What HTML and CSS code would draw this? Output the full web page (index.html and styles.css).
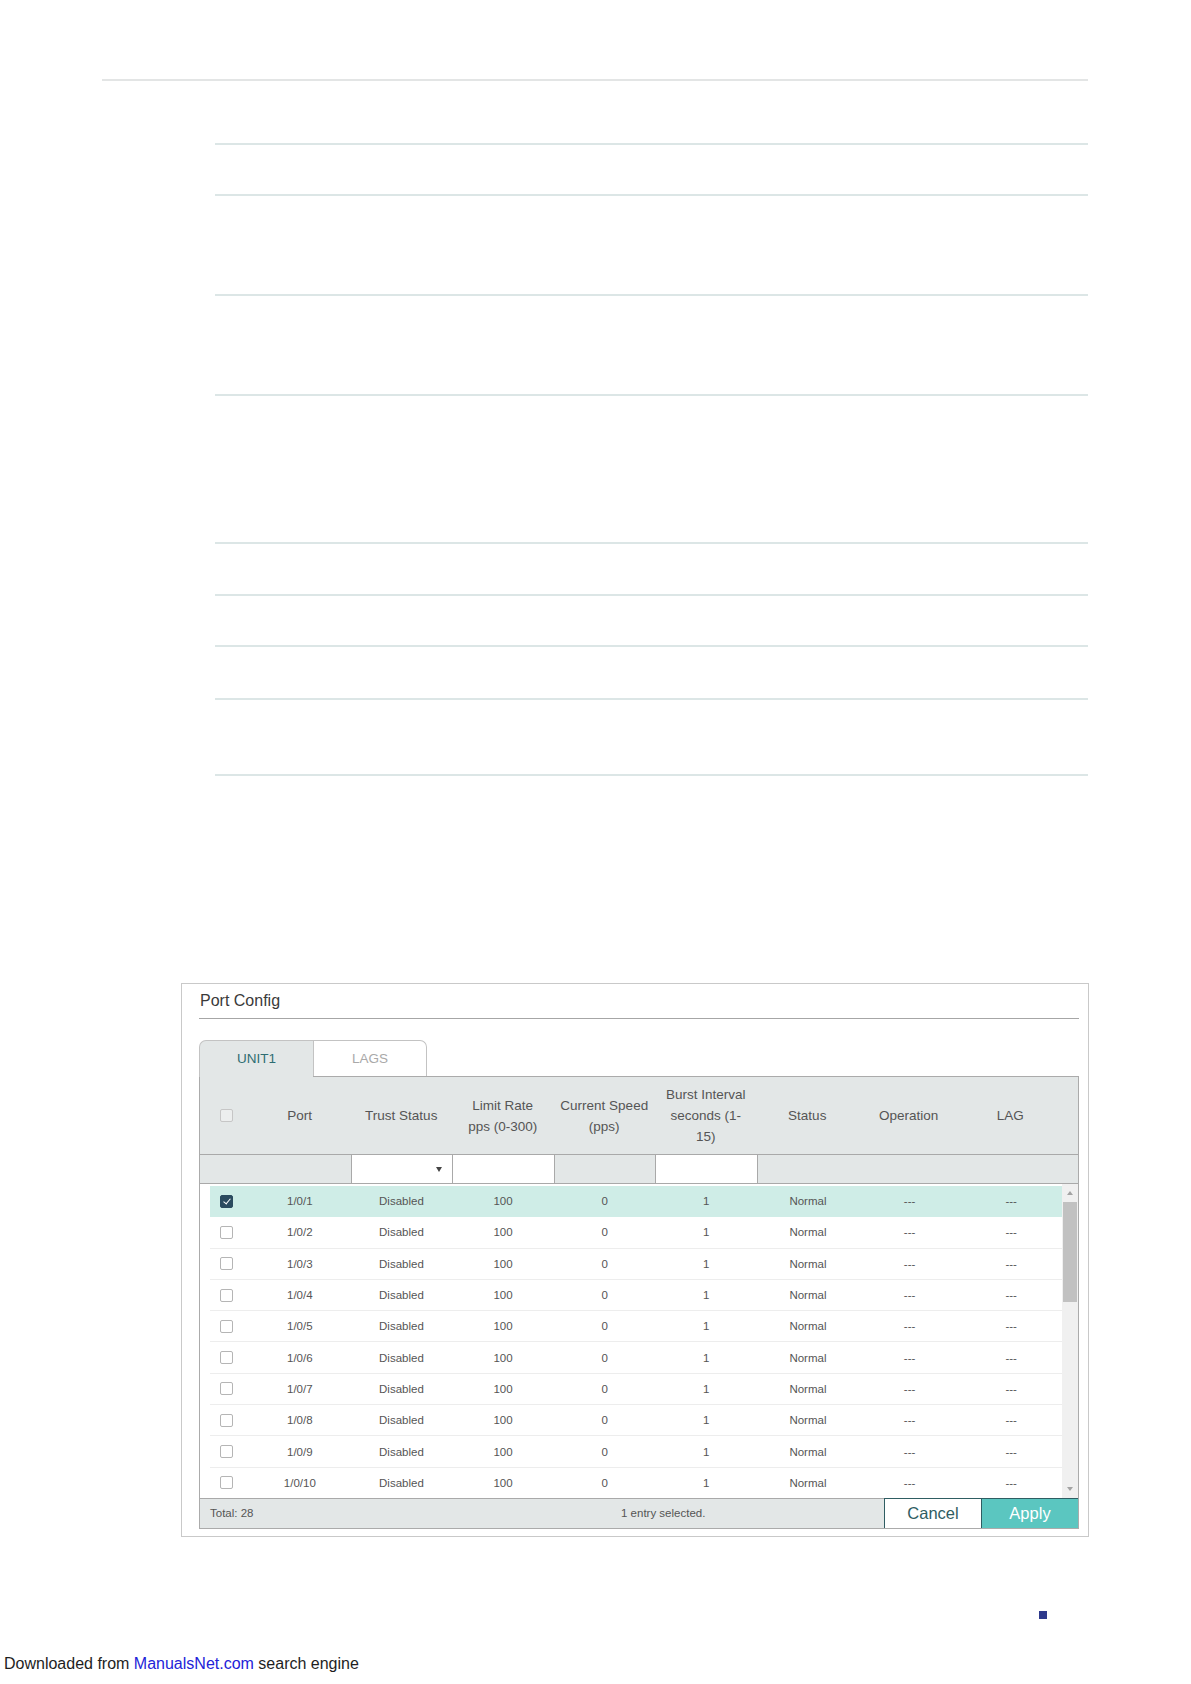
FILE: index.html
```html
<!DOCTYPE html>
<html lang="en">
  <head>
    <meta charset="UTF-8" />
    <title>Port Config</title>
    <link rel="stylesheet" href="styles.css">
  </head>
  <body>
    <div class="doc">
      <div class="rule-top"></div>
      <div class="doc-rows">
        <div class="doc-row h62"></div>
        <div class="doc-row h49"></div>
        <div class="doc-row h98"></div>
        <div class="doc-row h98"></div>
        <div class="doc-row h146"></div>
        <div class="doc-row h50"></div>
        <div class="doc-row h49"></div>
        <div class="doc-row h51"></div>
        <div class="doc-row h74"></div>
      </div>
    </div>

    <div class="panel">
      <div class="panel-title">Port Config</div>
      <div class="tabs">
        <div class="tab active">UNIT1</div>
        <div class="tab">LAGS</div>
      </div>
      <div class="grid">
        <div class="head">
          <div class="cell first"><span class="box disabled"></span></div>
          <div class="cell">Port</div>
          <div class="cell">Trust Status</div>
          <div class="cell">Limit Rate<br />pps (0-300)</div>
          <div class="cell">Current Speed<br />(pps)</div>
          <div class="cell">Burst Interval<br />seconds (1-<br />15)</div>
          <div class="cell">Status</div>
          <div class="cell">Operation</div>
          <div class="cell">LAG</div>
          <div class="cell"></div>
        </div>
        <div class="filter">
          <div class="fcell"></div>
          <div class="fcell"></div>
          <div class="fcell input select"><span class="caret"></span></div>
          <div class="fcell input"></div>
          <div class="fcell"></div>
          <div class="fcell input"></div>
          <div class="fcell"></div>
          <div class="fcell"></div>
          <div class="fcell"></div>
          <div class="fcell"></div>
        </div>
        <div class="body">
          <div class="rows" id="rows"></div>
          <div class="scrollbar">
            <span class="arrow up"></span>
            <span class="thumb"></span>
            <span class="arrow down"></span>
          </div>
        </div>
        <div class="foot">
          <span class="total">Total: 28</span>
          <span class="selected">1 entry selected.</span>
          <button class="btn cancel">Cancel</button>
          <button class="btn apply">Apply</button>
        </div>
      </div>
    </div>

    <div class="marker"></div>
    <p class="source">Downloaded from <a href="#">ManualsNet.com</a> search engine</p>

    <script>
      var rows = document.getElementById("rows");
      for (var i = 1; i <= 10; i++) {
        var row = document.createElement("div");
        row.className = i === 1 ? "row checked" : "row";
        row.innerHTML =
          '<div class="cell first"><span class="box"></span></div>' +
          '<div class="cell">1/0/' + i + '</div>' +
          '<div class="cell">Disabled</div>' +
          '<div class="cell">100</div>' +
          '<div class="cell">0</div>' +
          '<div class="cell">1</div>' +
          '<div class="cell">Normal</div>' +
          '<div class="cell">---</div>' +
          '<div class="cell">---</div>';
        rows.appendChild(row);
      }
    </script>
  </body>
</html>
```

FILE: styles.css
```css
body {
  margin: 0;
  font-family: "Liberation Sans", Arial, sans-serif;
  color: #333;
}

/* empty document table above the screenshot */
.doc {
  margin-left: 102px;
  width: 986px;
  padding-top: 79px;
}
.rule-top {
  border-top: 2px solid #e3e5e5;
}
.doc-rows {
  margin-left: 113px;
}
.doc-row {
  border-bottom: 2px solid #dce6e6;
}
.h49 { height: 49px; }
.h50 { height: 50px; }
.h51 { height: 51px; }
.h62 { height: 62px; }
.h74 { height: 74px; }
.h98 { height: 98px; }
.h146 { height: 146px; }

/* panel */
.panel {
  margin: 207px 0 0 181px;
  width: 906px;
  border: 1px solid #c9c9c9;
  padding-bottom: 7px;
}
.panel-title {
  margin: 0 9px 0 17px;
  padding: 7px 0 7px 1px;
  line-height: 20px;
  font-size: 16px;
  color: #3a3a3a;
  border-bottom: 1px solid #a6a6a6;
}
.tabs {
  display: flex;
  margin: 21px 9px 0 17px;
}
.tab {
  width: 114px;
  height: 36px;
  box-sizing: border-box;
  border: 1px solid #c3c3c3;
  border-bottom: none;
  background: #fff;
  color: #a9a9a9;
  font-size: 13.5px;
  line-height: 35px;
  text-align: center;
  border-top-right-radius: 7px;
}
.tab.active {
  width: 114px;
  background: #e3e7e7;
  color: #2e6d72;
  border-right: none;
  border-radius: 7px 0 0 0;
  position: relative;
  margin-bottom: -1px;
  height: 37px;
}

.grid {
  margin: 0 9px 0 17px;
  border: 1px solid #ababab;
}
.head,
.filter {
  display: grid;
  grid-template-columns: 49px repeat(8, 1fr) 17px;
  background: #e3e7e7;
}
.head {
  height: 77px;
  border-bottom: 1px solid #a9a9a9;
}
.head .cell {
  display: flex;
  align-items: center;
  justify-content: center;
  text-align: center;
  font-size: 13.5px;
  line-height: 21px;
  color: #555;
}
.head .cell.first {
  justify-content: flex-start;
  padding-left: 20px;
}
.filter {
  height: 28px;
  border-bottom: 1px solid #a9a9a9;
}
.fcell.input {
  background: #fff;
  border-left: 1px solid #a9a9a9;
  position: relative;
}
.fcell.input + .fcell {
  border-left: 1px solid #a9a9a9;
}
.caret {
  position: absolute;
  right: 10px;
  top: 12px;
  border-left: 3.5px solid transparent;
  border-right: 3.5px solid transparent;
  border-top: 5px solid #444;
}

.box {
  display: inline-block;
  width: 13px;
  height: 13px;
  box-sizing: border-box;
  border: 1px solid #b5b5b5;
  border-radius: 2px;
  background: #fff;
}
.box.disabled {
  background: #eceeee;
  border-color: #c6c6c6;
}
.checked .box {
  background: #2b4b5f;
  border-color: #2b4b5f;
  position: relative;
}
.checked .box::after {
  content: "";
  position: absolute;
  left: 3.5px;
  top: 1.5px;
  width: 3px;
  height: 6px;
  border-right: 1.5px solid #fff;
  border-bottom: 1.5px solid #fff;
  transform: rotate(40deg);
}

.body {
  display: flex;
  height: 314px;
  overflow: hidden;
}
.rows {
  flex: 1;
  padding: 2px 0 0 10px;
}
.row {
  display: grid;
  grid-template-columns: 39px repeat(8, 1fr);
  height: 31.3px;
  box-sizing: border-box;
  border-bottom: 1px solid #ededed;
}
.row.checked {
  background: #cfede7;
  border-bottom-color: #cfede7;
}
.row .cell {
  display: flex;
  align-items: center;
  justify-content: center;
  font-size: 11.5px;
  color: #555;
}
.row .cell.first {
  justify-content: flex-start;
  padding-left: 10px;
}
.scrollbar {
  width: 16px;
  background: #f0f0f0;
  display: flex;
  flex-direction: column;
  align-items: center;
}
.thumb {
  width: 14px;
  height: 100px;
  background: #c1c1c1;
}
.arrow {
  width: 0;
  height: 0;
  border-left: 3.5px solid transparent;
  border-right: 3.5px solid transparent;
}
.arrow.up {
  border-bottom: 4px solid #a3a3a3;
  margin: 7px 0 7px;
}
.arrow.down {
  border-top: 4px solid #a3a3a3;
  margin-top: auto;
  margin-bottom: 7px;
}

.foot {
  display: flex;
  align-items: stretch;
  height: 29px;
  border-top: 1px solid #a9a9a9;
  background: #e3e7e7;
}
.total {
  width: 411px;
  padding-left: 10px;
  font-size: 11.5px;
  line-height: 29px;
  color: #555;
}
.selected {
  flex: 1;
  font-size: 11.5px;
  line-height: 29px;
  color: #555;
}
.btn {
  margin-top: -1px;
  height: 30px;
  font-family: "Liberation Sans", Arial, sans-serif;
  font-size: 16.5px;
  border: none;
  cursor: pointer;
}
.cancel {
  width: 98px;
  background: #fff;
  color: #2f5d62;
  border: 1px solid #2f5d62;
  border-bottom: none;
}
.apply {
  width: 96px;
  background: #5bc6c0;
  color: #fff;
  border-top: 1px solid #2f5d62;
}

.marker {
  margin: 74px 0 0 1039px;
  width: 8px;
  height: 8px;
  background: #2e3a8c;
}
.source {
  margin: 36px 0 0 4px;
  font-size: 16px;
  line-height: 18px;
  color: #1e1e1e;
}
.source a {
  color: #2323d8;
  text-decoration: none;
}
```
